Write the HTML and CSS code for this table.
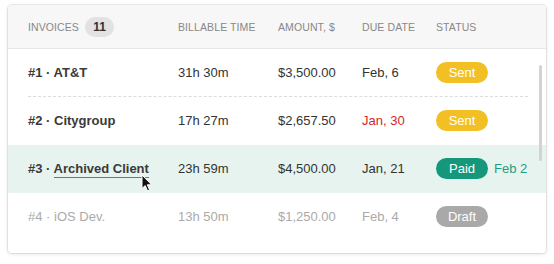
FILE: index.html
```html
<!DOCTYPE html>
<html>
<head>
<meta charset="utf-8">
<link rel="stylesheet" href="styles.css">
</head>
<body>
<div class="card">
  <div class="head">
    <div class="hcell inv">Invoices <span class="count">11</span></div>
    <div class="hcell">Billable time</div>
    <div class="hcell">Amount, $</div>
    <div class="hcell">Due date</div>
    <div class="hcell">Status</div>
  </div>
  <div class="body">
    <div class="row">
      <div class="cells sep">
        <div class="name">#1 · AT&amp;T</div>
        <div>31h 30m</div>
        <div>$3,500.00</div>
        <div>Feb, 6</div>
        <div class="status"><span class="badge sent">Sent</span></div>
      </div>
    </div>
    <div class="row">
      <div class="cells">
        <div class="name">#2 · Citygroup</div>
        <div>17h 27m</div>
        <div>$2,657.50</div>
        <div class="overdue">Jan, 30</div>
        <div class="status"><span class="badge sent">Sent</span></div>
      </div>
    </div>
    <div class="row active">
      <div class="cells">
        <div class="name">#3 · <span class="link">Archived Client</span></div>
        <div>23h 59m</div>
        <div>$4,500.00</div>
        <div>Jan, 21</div>
        <div class="status"><span class="badge paid">Paid</span><span class="paid-date">Feb 2</span></div>
      </div>
      <svg class="cursor" width="12" height="18" viewBox="0 0 12 18"><path d="M1 1 L1 14.5 L4.2 11.6 L6.6 17 L8.6 16.1 L6.3 10.8 L10.6 10.8 Z" fill="#111" stroke="#fff" stroke-width="1" stroke-linejoin="round"/></svg>
    </div>
    <div class="row draft">
      <div class="cells">
        <div class="name">#4 · iOS Dev.</div>
        <div>13h 50m</div>
        <div>$1,250.00</div>
        <div>Feb, 4</div>
        <div class="status"><span class="badge grey">Draft</span></div>
      </div>
    </div>
    <div class="scrollbar"></div>
  </div>
</div>
</body>
</html>
```
FILE: styles.css
```css
html, body {
  margin: 0;
  padding: 0;
  background: #fff;
}
body {
  padding: 5px 8px;
  font-family: "Liberation Sans", Arial, Helvetica, sans-serif;
  font-size: 13px;
  color: #333;
}
.card {
  width: 538px;
  height: 248px;
  box-sizing: border-box;
  background: #fff;
  border-radius: 4px;
  box-shadow: 0 0 0 1px rgba(0,0,0,0.07), 0 1px 4px rgba(0,0,0,0.12);
  overflow: hidden;
}
.head {
  display: grid;
  grid-template-columns: 150px 100px 84px 74px 1fr;
  align-items: center;
  height: 44px;
  padding-left: 20px;
  padding-top: 1px;
  box-sizing: border-box;
  background: #f7f7f7;
  border-bottom: 1px solid #e6e6e6;
}
.hcell {
  font-size: 10.5px;
  text-transform: uppercase;
  letter-spacing: 0.1px;
  color: #888;
  display: flex;
  align-items: center;
}
.count {
  display: inline-flex;
  align-items: center;
  justify-content: center;
  width: 29px;
  height: 20px;
  margin-left: 6px;
  border-radius: 10px;
  background: #e2e2e2;
  color: #333;
  font-weight: bold;
  font-size: 12px;
  letter-spacing: 0;
}
.body {
  position: relative;
}
.row {
  position: relative;
}
.cells {
  display: grid;
  grid-template-columns: 150px 100px 84px 74px 1fr;
  align-items: center;
  height: 47px;
  margin: 0 18px 0 20px;
  border-bottom: 1px solid transparent;
}
.cells.sep {
  border-bottom: 1px dashed #dcdcdc;
}
.name {
  font-weight: bold;
  color: #3a3a3a;
}
.overdue {
  color: #d3262c;
}
.status {
  display: flex;
  align-items: center;
}
.badge {
  display: inline-flex;
  align-items: center;
  justify-content: center;
  width: 52px;
  height: 21px;
  border-radius: 11px;
  color: #fff;
  font-size: 13px;
}
.sent { background: #f2bf24; }
.paid { background: #15977b; }
.grey { background: #a9a9a9; }
.paid-date {
  margin-left: 6px;
  color: #1ba083;
}
.row.active {
  background: #e6f3ef;
}
.link {
  padding-bottom: 1px;
  border-bottom: 1px solid #1ba083;
}
.row.draft .cells,
.row.draft .name {
  color: #aaa;
  font-weight: normal;
}
.cursor {
  position: absolute;
  left: 133px;
  top: 29px;
}
.scrollbar {
  position: absolute;
  right: 4px;
  top: 16px;
  width: 3px;
  height: 96px;
  border-radius: 2px;
  background: #d3d3d3;
}
```
